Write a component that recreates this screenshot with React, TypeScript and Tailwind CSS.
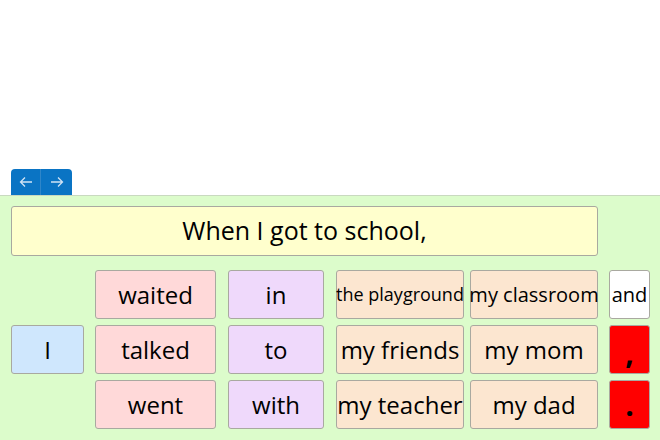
const font = { fontFamily: '"Open Sans", "Noto Sans", sans-serif' };

type Tile = { text: string; cls: string; size?: string };

function WordTile({ text, cls, size = "text-[24px]" }: Tile) {
  return (
    <div
      className={`h-[49px] flex items-center justify-center rounded-[3px] border border-[#a9a9a0] text-black whitespace-nowrap ${cls} ${size}`}
    >
      {text}
    </div>
  );
}

const verbs = ["waited", "talked", "went"];
const preps = ["in", "to", "with"];

export default function App() {
  return (
    <div className="w-[660px] h-[440px] flex flex-col bg-white overflow-hidden" style={font}>
      <div className="flex-1" />
      <div className="flex pl-[11px]">
        <div className="flex h-[26px] bg-[#0a74c4] rounded-t-[4px] text-white">
          <button className="w-[30px] flex items-center justify-center border-r border-[#2f86c9]">
            <svg width="14" height="12" viewBox="0 0 14 12" fill="none" stroke="#cfe3f5" strokeWidth="1.3">
              <path d="M13 6H1.5M6 1.5L1.5 6L6 10.5" />
            </svg>
          </button>
          <button className="w-[31px] flex items-center justify-center">
            <svg width="14" height="12" viewBox="0 0 14 12" fill="none" stroke="#cfe3f5" strokeWidth="1.3">
              <path d="M1 6H12.5M8 1.5L12.5 6L8 10.5" />
            </svg>
          </button>
        </div>
      </div>
      <div className="h-[245px] bg-[#dcfccb] border-t border-[#c9d9c0] pt-[10px] pl-[11px]">
        <div className="w-[587px] h-[50px] flex items-center justify-center bg-[#ffffcd] border border-[#a9a9a0] rounded-[3px] text-[25px] text-black">
          When I got to school,
        </div>
        <div className="flex mt-[14px]">
          <div className="w-[73px] flex flex-col justify-center">
            <WordTile text="I" cls="bg-[#cfe7fd]" />
          </div>
          <div className="w-[121px] ml-[11px] flex flex-col gap-[6px]">
            {verbs.map((v) => (
              <WordTile key={v} text={v} cls="bg-[#ffd9d9]" />
            ))}
          </div>
          <div className="w-[96px] ml-[12px] flex flex-col gap-[6px]">
            {preps.map((p) => (
              <WordTile key={p} text={p} cls="bg-[#efd9fb]" />
            ))}
          </div>
          <div className="w-[128px] ml-[12px] flex flex-col gap-[6px]">
            <WordTile text="the playground" cls="bg-[#fce6d0]" size="text-[18px]" />
            <WordTile text="my friends" cls="bg-[#fce6d0]" />
            <WordTile text="my teacher" cls="bg-[#fce6d0]" size="text-[24px]" />
          </div>
          <div className="w-[128px] ml-[6px] flex flex-col gap-[6px]">
            <WordTile text="my classroom" cls="bg-[#fce6d0]" size="text-[20px]" />
            <WordTile text="my mom" cls="bg-[#fce6d0]" />
            <WordTile text="my dad" cls="bg-[#fce6d0]" />
          </div>
          <div className="w-[41px] ml-[11px] flex flex-col gap-[6px]">
            <WordTile text="and" cls="bg-white" size="text-[20px]" />
            <WordTile text="," cls="bg-[#ff0000] font-bold pt-[6px]" size="text-[30px]" />
            <WordTile text="." cls="bg-[#ff0000] font-bold" size="text-[30px]" />
          </div>
        </div>
      </div>
    </div>
  );
}
